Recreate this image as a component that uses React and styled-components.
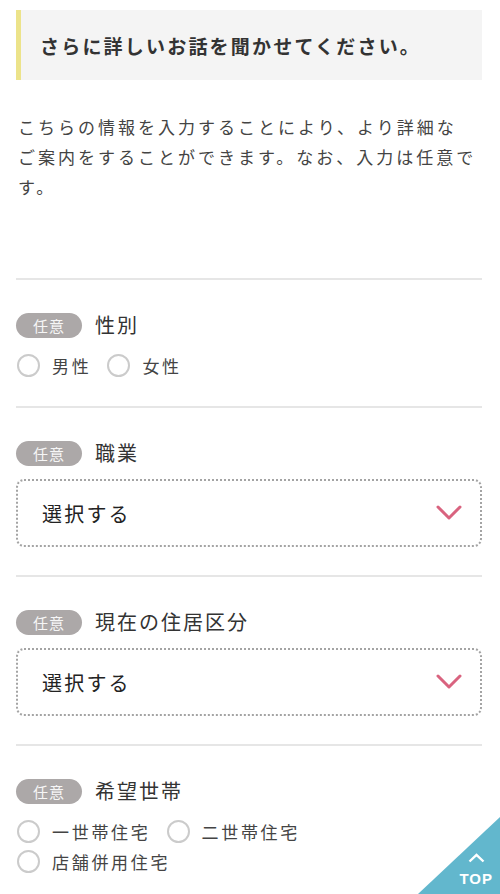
import styled, { createGlobalStyle } from 'styled-components'

const Global = createGlobalStyle`
  html, body {
    margin: 0;
    background: #fff;
  }
  body {
    font-family: "Noto Sans CJK JP", "Noto Sans", sans-serif;
    color: #333;
  }
`

const Page = styled.div`
  padding: 10px 18px 0 16px;
`

const Heading = styled.h2`
  margin: 0;
  height: 70px;
  display: flex;
  align-items: center;
  padding-left: 19px;
  background: #f4f4f4;
  border-left: 5px solid #ece38a;
  font-size: 19px;
  font-weight: 700;
  letter-spacing: 2.2px;
  color: #333;
`

const Lead = styled.p`
  margin: 32px 0 0 2px;
  font-size: 17px;
  line-height: 30px;
  letter-spacing: 3px;
  color: #444;
`

const Phrase = styled.span`
  white-space: nowrap;
`

const Sections = styled.div`
  margin-top: 76px;
`

const Section = styled.section`
  border-top: 2px solid #e6e6e6;
  padding: 33px 0 ${({ pb }) => pb}px;
`

const LabelRow = styled.div`
  display: flex;
  align-items: center;
  gap: 13px;
  height: 25px;
`

const Badge = styled.span`
  display: inline-flex;
  align-items: center;
  justify-content: center;
  width: 66px;
  height: 25px;
  border-radius: 13px;
  background: #aca8a8;
  color: #f6f6f6;
  font-size: 15px;
  letter-spacing: 1px;
`

const Label = styled.span`
  font-size: 20px;
  letter-spacing: 2px;
  color: #333;
  margin-top: -3px;
`

const Options = styled.div`
  display: flex;
  flex-wrap: wrap;
  margin-top: 12px;
  padding-right: 24px;
  column-gap: 15px;
`

const Option = styled.label`
  display: flex;
  align-items: center;
  height: 30px;
  gap: 12px;
  font-size: 17px;
  letter-spacing: 2.7px;
  color: #444;
`

const Circle = styled.span`
  box-sizing: border-box;
  width: 23px;
  height: 23px;
  margin-left: 1px;
  border-radius: 50%;
  border: 2px solid #cbcbcb;
  background: #fff;
`

const Select = styled.div`
  box-sizing: border-box;
  margin-top: 13px;
  height: 68px;
  display: flex;
  align-items: center;
  justify-content: space-between;
  padding: 0 18px 0 24px;
  border: 2px dotted #a4a4a4;
  border-radius: 8px;
  font-size: 20px;
  letter-spacing: 2.2px;
  color: #222;
`

const TopButton = styled.a`
  position: fixed;
  right: 0;
  bottom: 0;
  width: 82px;
  height: 77px;
  background: #62b7cd;
  clip-path: polygon(100% 0, 100% 100%, 0 100%);
  display: flex;
  flex-direction: column;
  align-items: flex-end;
  justify-content: flex-end;
  padding: 0 7px 10px 0;
  box-sizing: border-box;
  color: #fff;
  font-family: "Liberation Sans", Arial, sans-serif;
  font-weight: 700;
  font-size: 15px;
  letter-spacing: 1px;
  line-height: 11px;
`

const TopArrow = styled.svg`
  display: block;
  margin: 0 8px 10px 0;
`

const Chevron = () => (
  <svg width="26" height="16" viewBox="0 0 26 16">
    <path d="M2 2 L13 13 L24 2" fill="none" stroke="#d9637f" strokeWidth="3" strokeLinecap="round" strokeLinejoin="round" />
  </svg>
)

const fields = [
  { label: '性別', type: 'radio', options: ['男性', '女性'] },
  { label: '職業', type: 'select' },
  { label: '現在の住居区分', type: 'select' },
  { label: '希望世帯', type: 'radio', options: ['一世帯住宅', '二世帯住宅', '店舗併用住宅'] },
]

export default function App() {
  return (
    <>
      <Global />
      <Page>
        <Heading>さらに詳しいお話を聞かせてください。</Heading>
        <Lead>
          こちらの情報を入力することにより、より詳細な<Phrase>ご案内</Phrase>をすることができます。なお、入力は任意です。
        </Lead>
        <Sections>
          {fields.map((f, i) => (
            <Section key={f.label} pb={i === fields.length - 1 ? 17 : f.type === 'radio' ? 26 : 28}>
              <LabelRow>
                <Badge>任意</Badge>
                <Label>{f.label}</Label>
              </LabelRow>
              {f.type === 'radio' ? (
                <Options>
                  {f.options.map(o => (
                    <Option key={o}>
                      <Circle />
                      {o}
                    </Option>
                  ))}
                </Options>
              ) : (
                <Select>
                  選択する
                  <Chevron />
                </Select>
              )}
            </Section>
          ))}
        </Sections>
      </Page>
      <TopButton>
        <TopArrow width="17" height="10" viewBox="0 0 17 10">
          <path d="M1.5 8.5 L8.5 1.8 L15.5 8.5" fill="none" stroke="#fff" strokeWidth="2.4" />
        </TopArrow>
        TOP
      </TopButton>
    </>
  )
}
